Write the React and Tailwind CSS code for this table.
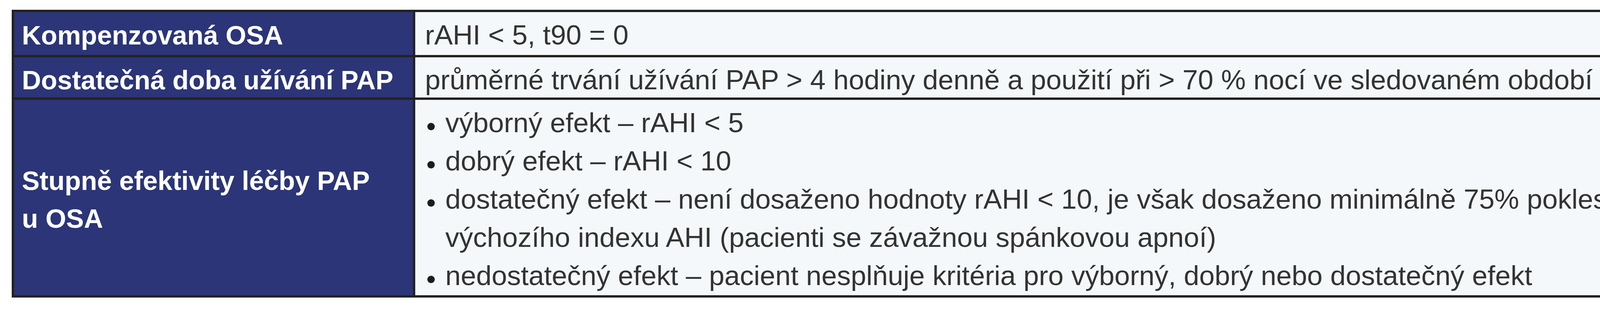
export default function App() {
  const items = [
    ["výborný efekt – rAHI < 5"],
    ["dobrý efekt – rAHI < 10"],
    [
      "dostatečný efekt – není dosaženo hodnoty rAHI < 10, je však dosaženo minimálně 75% poklesu",
      "výchozího indexu AHI (pacienti se závažnou spánkovou apnoí)",
    ],
    ["nedostatečný efekt – pacient nesplňuje kritéria pro výborný, dobrý nebo dostatečný efekt"],
  ];

  return (
    <div className="w-[4348px] h-[800px] bg-white pt-[25px] pl-[30px] font-['Liberation_Sans',Arial,sans-serif]">
      <div className="w-[4233px] grid grid-cols-[1021px_3194px] grid-rows-[110px_103px_501px] gap-[6px] border-[6px] border-[#222222] bg-[#222222]">
        {/* Row 1 */}
        <div className="bg-[#2b3578] text-white font-bold text-[68px] leading-[97px] pl-[20px] pt-[11px] whitespace-nowrap">
          Kompenzovaná OSA
        </div>
        <div className="bg-[#f4f8fb] text-[#333333] text-[71px] leading-[98px] pl-[25px] pt-[10px] whitespace-nowrap">
          rAHI &lt; 5, t90 = 0
        </div>

        {/* Row 2 */}
        <div className="bg-[#2b3578] text-white font-bold text-[68px] leading-[97px] pl-[20px] pt-[10px] whitespace-nowrap">
          Dostatečná doba užívání PAP
        </div>
        <div className="bg-[#f4f8fb] text-[#333333] text-[71px] leading-[98px] pl-[25px] pt-[9px] whitespace-nowrap">
          průměrné trvání užívání PAP &gt; 4 hodiny denně a použití při &gt; 70 % nocí ve sledovaném období
        </div>

        {/* Row 3 */}
        <div className="bg-[#2b3578] text-white font-bold text-[68px] leading-[97px] pl-[20px] pt-[159px] whitespace-nowrap">
          Stupně efektivity léčby PAP
          <br />
          u OSA
        </div>
        <div className="bg-[#f4f8fb] text-[#333333] text-[71px] leading-[98px] pl-[31px] pt-[10px]">
          <ul className="flex flex-col">
            {items.map((lines, i) => (
              <li key={i} className="flex">
                <div className="w-[46px] shrink-0 h-[98px] flex items-start pt-[49px]">
                  <span className="block w-[19px] h-[19px] rounded-full bg-[#1c1c1c]" />
                </div>
                <div className="whitespace-nowrap">
                  {lines.map((l, j) => (
                    <div key={j}>{l}</div>
                  ))}
                </div>
              </li>
            ))}
          </ul>
        </div>
      </div>
    </div>
  );
}
